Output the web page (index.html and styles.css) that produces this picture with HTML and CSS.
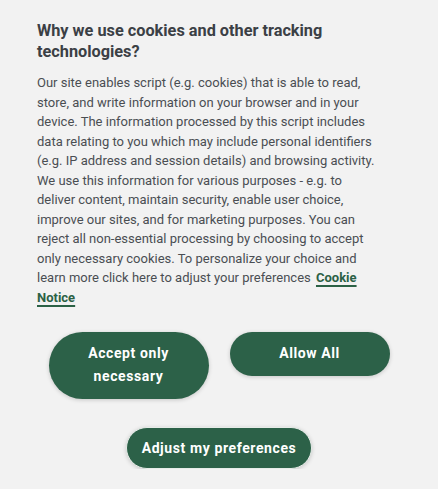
FILE: index.html
```html
<!DOCTYPE html>
<html lang="en">
<head>
<meta charset="utf-8">
<title>Cookies</title>
<link rel="stylesheet" href="styles.css">
</head>
<body>
<div class="banner">
  <h2 class="title">Why we use cookies and other tracking technologies?</h2>
  <p class="text">Our site enables script (e.g. cookies) that is able to read, store, and write information on your browser and in your device. The information processed by this script includes data relating to you which may include personal identifiers (e.g. IP address and session details) and browsing activity. We use this information for various purposes - e.g. to deliver content, maintain security, enable user choice, improve our sites, and for marketing purposes. You can reject all non-essential processing by choosing to accept only necessary cookies. To personalize your choice and learn more click here to adjust your preferences <a class="link" href="#">Cookie Notice</a></p>
  <div class="actions">
    <div class="row">
      <button class="btn btn-half">Accept only necessary</button>
      <button class="btn btn-half">Allow All</button>
    </div>
    <div class="row">
      <button class="btn btn-pref">Adjust my preferences</button>
    </div>
  </div>
</div>
</body>
</html>
```

FILE: styles.css
```css
html, body {
  margin: 0;
  padding: 0;
  background: #f2f2f2;
}
body {
  font-family: Roboto, "Liberation Sans", Arial, sans-serif;
}
.banner {
  padding: 21px 56px 0 37px;
}
.title {
  margin: 0;
  font-size: 16.3px;
  line-height: 20.5px;
  font-weight: 700;
  color: #3b4045;
}
.text {
  margin: 11px 0 0;
  font-size: 13px;
  line-height: 19.55px;
  color: #4a4e53;
}
.link {
  color: #2b6145;
  font-weight: 700;
  text-decoration: underline;
  text-decoration-thickness: 2px;
  text-underline-offset: 3px;
  margin-left: 2px;
}
.actions {
  margin: 24px 0 0 -37px;
  width: 438px;
  display: flex;
  flex-direction: column;
  align-items: center;
  gap: 28px;
}
.row {
  display: flex;
  align-items: flex-start;
  gap: 21px;
}
.btn {
  font-family: Roboto, "Liberation Sans", Arial, sans-serif;
  background: #2c6148;
  color: #ffffff;
  border: none;
  border-radius: 999px;
  font-size: 14px;
  font-weight: 700;
  letter-spacing: 0.6px;
  line-height: 23px;
  box-shadow: 0 1px 4px rgba(0, 0, 0, 0.18);
  cursor: pointer;
}
.btn-half {
  width: 160px;
  padding: 10.5px 16px;
}
.btn-pref {
  width: 186px;
  padding: 9.5px 8px;
  border: 1px solid #e6ece8;
  box-sizing: border-box;
  height: 42px;
}
```
